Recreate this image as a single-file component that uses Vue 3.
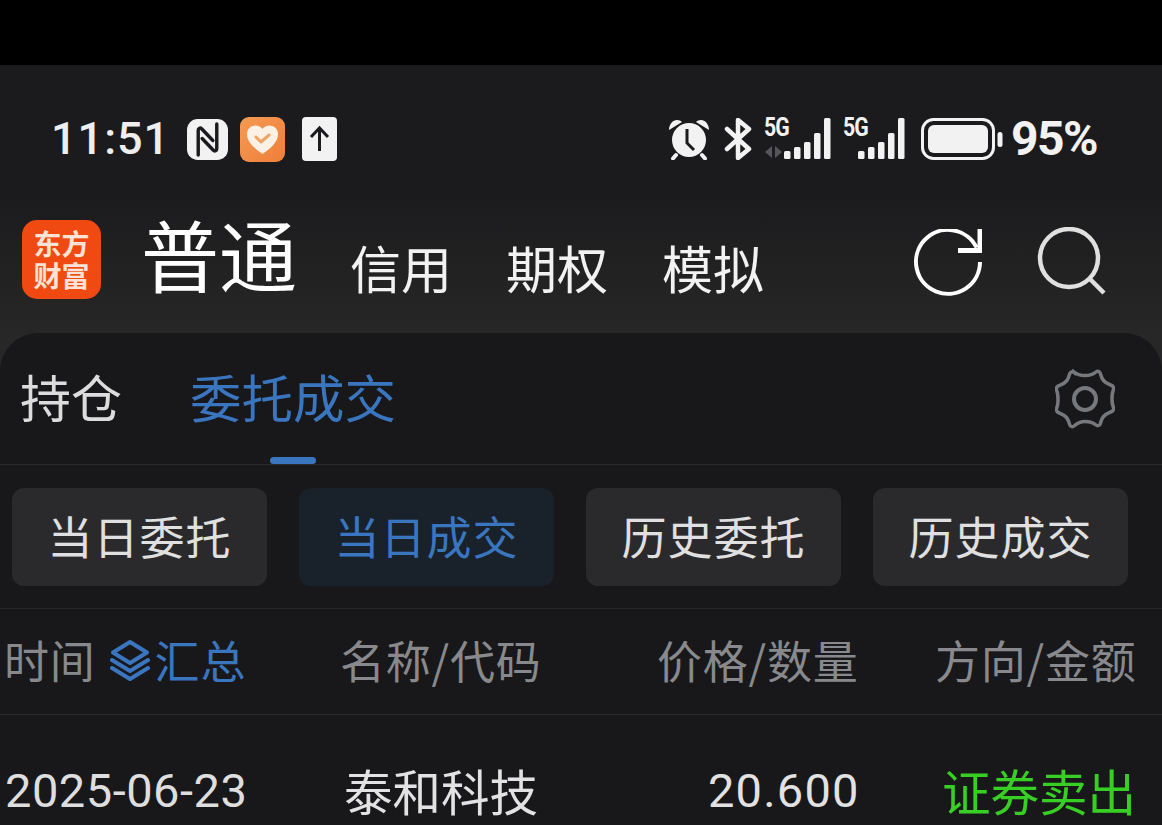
<script setup>
const filters = [
  { label: '当日委托' },
  { label: '当日成交', active: true },
  { label: '历史委托' },
  { label: '历史成交' }
]
const bars = [
  { x: 0, h: 8 },
  { x: 10, h: 12 },
  { x: 20, h: 17 },
  { x: 30, h: 26 },
  { x: 40, h: 41 }
]
</script>

<template>
  <div class="page">
    <div class="blackbar"></div>

    <div class="top">
      <div class="status">
        <div class="status-left">
          <span class="clock">11:51</span>
          <svg class="nfc" width="41" height="41" viewBox="0 0 42 42">
            <rect width="42" height="42" rx="11" fill="#f2f2f2" />
            <path d="M11.500 37V11.500a2 2 0 0 1 3.500-1.500l11.500 12" fill="none" stroke="#1b1b1d" stroke-width="3.500" stroke-linecap="round" />
            <path d="M30.500 5v25.500a2 2 0 0 1-3.500 1.500L15.500 20" fill="none" stroke="#1b1b1d" stroke-width="3.500" stroke-linecap="round" />
          </svg>
          <svg class="health" width="45" height="45" viewBox="0 0 45 45">
            <defs>
              <linearGradient id="healthBg" x1="0" y1="0" x2="1" y2="1">
                <stop offset="0" stop-color="#f59a52" />
                <stop offset="1" stop-color="#ee7f3a" />
              </linearGradient>
            </defs>
            <rect width="45" height="45" rx="9" fill="url(#healthBg)" />
            <path d="M22.500 37C14 31 7 25 7 17c0-5 4-8.500 8.500-8.500 3 0 5.500 1.200 7 3.500 1.500-2.300 4-3.500 7-3.500C34 8.500 38 12 38 17c0 8-7 14-15.500 20z" fill="#fdf1e6" />
            <path d="M16 20l5 5 8-7" fill="none" stroke="#f0a465" stroke-width="3" stroke-linecap="round" stroke-linejoin="round" />
          </svg>
          <svg class="upload" width="35" height="44" viewBox="0 0 35 44">
            <rect width="35" height="44" rx="4" fill="#f2f2f2" />
            <path d="M17.500 34V12M9 20l8.500-9 8.500 9" fill="none" stroke="#1b1b1d" stroke-width="3" />
          </svg>
        </div>

        <div class="status-right">
          <svg class="alarm" width="42" height="42" viewBox="0 0 42 42">
            <circle cx="21" cy="22" r="17" fill="#f2f2f2" />
            <path d="M1 12c0-6 4-10 8-10 2 0 4 .8 5 2zM41 12c0-6-4-10-8-10-2 0-4 .8-5 2z" fill="#f2f2f2" />
            <path d="M8 37l-3 3.500M34 37l3 3.500" stroke="#f2f2f2" stroke-width="4" stroke-linecap="round" />
            <path d="M19 11v14l7 7" fill="none" stroke="#1b1b1d" stroke-width="3" />
          </svg>
          <svg class="bt" width="28" height="42" viewBox="0 0 28 42">
            <path d="M3 11l22 20-11 9V2l11 9L3 31" fill="none" stroke="#f2f2f2" stroke-width="4.500" stroke-linejoin="round" stroke-linecap="round" />
          </svg>
          <div class="sim sim-first">
            <span class="five-g">5G</span>
            <svg class="arrows" width="18" height="12" viewBox="0 0 18 12">
              <path d="M7 0v12L0 6zM10 0v12l7-6z" fill="#55565a" />
            </svg>
            <svg class="bars" width="47" height="41" viewBox="0 0 47 41">
              <rect v-for="b in bars" :key="b.x" :x="b.x" :y="41 - b.h" width="6.500" :height="b.h" rx="1.500" fill="#f2f2f2" />
            </svg>
          </div>
          <div class="sim sim-second">
            <span class="five-g">5G</span>
            <svg class="bars" width="47" height="41" viewBox="0 0 47 41">
              <rect v-for="b in bars" :key="b.x" :x="b.x" :y="41 - b.h" width="6.500" :height="b.h" rx="1.500" fill="#f2f2f2" />
            </svg>
          </div>
          <svg class="battery" width="82" height="42" viewBox="0 0 82 42">
            <rect x="1.500" y="1.500" width="71" height="39" rx="11" fill="none" stroke="#f2f2f2" stroke-width="3" />
            <rect x="7" y="7" width="60" height="28" rx="6" fill="#f2f2f2" />
            <rect x="76.500" y="14" width="5" height="15" rx="2.500" fill="#f2f2f2" />
          </svg>
          <span class="percent">95%</span>
        </div>
      </div>

      <div class="header">
        <div class="logo">
          <span>东方</span>
          <span>财富</span>
        </div>
        <div class="title">普通</div>
        <div class="links">
          <span>信用</span>
          <span>期权</span>
          <span>模拟</span>
        </div>
        <div class="actions">
          <svg class="refresh" width="68" height="68" viewBox="0 0 68 68">
            <path d="M66 33A32 32 0 1 1 62.700 18.700" fill="none" stroke="#fff" stroke-width="4" />
            <path d="M66 0v21.500H44" fill="none" stroke="#fff" stroke-width="5" />
          </svg>
          <svg class="search" width="70" height="68" viewBox="0 0 70 68">
            <circle cx="32" cy="31" r="29" fill="none" stroke="#e0e0e0" stroke-width="4.500" />
            <path d="M53 52l14 14" stroke="#e0e0e0" stroke-width="4.500" />
          </svg>
        </div>
      </div>
    </div>

    <div class="card">
      <div class="tabs">
        <span class="tab">持仓</span>
        <span class="tab tab-active">委托成交</span>
        <svg class="gear" width="60" height="60" viewBox="0 0 60 60">
          <path d="M19 3c3.500 3 6.500 3.500 11 3.500S37.500 6 41 3c1-.8 2.500-.8 3.500 0 1.500 1.200 1 5 4 8.500s7 4 9 5.500c1 1 1.500 2.500 1 3.500-1.500 3-1.500 6-1.500 9s0 6 1.500 9c.5 1 0 2.500-1 3.500-2 1.500-6 2-9 5.500s-2.500 7.300-4 8.500c-1 .8-2.500.8-3.500 0-3.500-3-6.500-3.500-11-3.500S22.500 54 19 57c-1 .8-2.500.8-3.500 0-1.500-1.200-1-5-4-8.500s-7-4-9-5.500c-1-1-1.500-2.500-1-3.500C3 36.500 3 33 3 30s0-6-1.500-9c-.5-1 0-2.500 1-3.500 2-1.500 6-2 9-5.500s2.500-7.300 4-8.500c1-.8 2.500-.8 3.500 0z" fill="none" stroke="#77787b" stroke-width="3.500" />
          <circle cx="30" cy="30" r="11" fill="none" stroke="#77787b" stroke-width="4" />
        </svg>
        <div class="tab-mark"></div>
      </div>

      <div class="filters">
        <div v-for="f in filters" :key="f.label" class="filter" :class="{ on: f.active }">{{ f.label }}</div>
      </div>

      <div class="thead">
        <div class="col col-time">
          <span>时间</span>
          <svg class="layers" width="42" height="42" viewBox="0 0 42 42">
            <path d="M21 3L38 13.500 21 24 4 13.500z" fill="none" stroke="#3a76c0" stroke-width="4" stroke-linejoin="round" />
            <path d="M3 21l18 11 18-11M3 29l18 11 18-11" fill="none" stroke="#3a76c0" stroke-width="4" stroke-linecap="round" stroke-linejoin="round" />
          </svg>
          <span class="sum">汇总</span>
        </div>
        <div class="col col-name">名称/代码</div>
        <div class="col col-price">价格/数量</div>
        <div class="col col-side">方向/金额</div>
      </div>

      <div class="row">
        <div class="col-time date">2025-06-23</div>
        <div class="col-name stock">泰和科技</div>
        <div class="col-price price">20.600</div>
        <div class="col-side side">证券卖出</div>
      </div>
    </div>
  </div>
</template>

<style>
html, body {
  background: #000;
  overflow: hidden;
}
</style>

<style scoped>
.page {
  width: 1162px;
  height: 825px;
  overflow: hidden;
  display: flex;
  flex-direction: column;
  font-family: "Noto Sans", "Noto Sans CJK SC", sans-serif;
  color: #f2f2f2;
}

.blackbar {
  height: 65px;
  flex: none;
  background: #000;
}

.top {
  height: 308px;
  flex: none;
  background: linear-gradient(#1b1b1d 0%, #1b1b1d 40%, #272727 88%);
  display: flex;
  flex-direction: column;
}

.status {
  height: 44px;
  margin-top: 52px;
  padding: 0 65px 0 52px;
  display: flex;
  align-items: center;
  justify-content: space-between;
}

.status-left,
.status-right {
  display: flex;
  align-items: center;
}

.clock {
  font-family: Roboto, sans-serif;
  font-size: 45px;
  font-weight: 500;
  line-height: 44px;
  letter-spacing: 1px;
  color: #eeeeee;
  margin-left: -1px;
}

.nfc { margin-left: 17px; }
.health { margin-left: 12px; }
.upload { margin-left: 17px; }

.alarm { margin-right: 14px; }
.bt { margin-right: 12px; }

.sim {
  position: relative;
  width: 67px;
  height: 42px;
}

.sim-second { margin-left: 7px; }

.five-g {
  position: absolute;
  left: 0;
  top: -2px;
  font-family: "Roboto", sans-serif;
  font-weight: 700;
  font-size: 25px;
  line-height: 24px;
  letter-spacing: -1px;
  transform: scaleX(.85);
  transform-origin: left;
}

.sim-second .five-g { left: 5px; }

.arrows {
  position: absolute;
  left: 1px;
  top: 28px;
}

.bars {
  position: absolute;
  right: 0;
  top: 0;
}

.battery { margin-left: 16px; }

.percent {
  margin-left: 8px;
  font-family: Roboto, sans-serif;
  font-size: 48px;
  font-weight: 700;
  line-height: 44px;
  letter-spacing: -1.500px;
}

.header {
  display: flex;
  align-items: center;
  position: relative;
  height: 100px;
  margin-top: 48px;
  padding-left: 22px;
}

.logo {
  width: 79px;
  height: 79px;
  border-radius: 15px;
  background: #f04a12;
  display: flex;
  flex-direction: column;
  align-items: center;
  justify-content: center;
  font-family: "Noto Sans CJK SC", sans-serif;
  font-size: 28px;
  line-height: 32px;
  font-weight: 700;
  color: #fde3d3;
}

.title {
  margin-left: 40px;
  margin-top: -12px;
  font-family: "Noto Sans CJK SC", sans-serif;
  font-size: 78px;
  line-height: 80px;
  font-weight: 400;
  color: #fff;
}

.links {
  display: flex;
  gap: 54px;
  margin-left: 53px;
  margin-top: 16px;
  font-family: "Noto Sans CJK SC", sans-serif;
  font-size: 51px;
  line-height: 60px;
  color: #f2f2f2;
}

.actions {
  margin-left: auto;
  margin-right: 55px;
  margin-top: 5px;
  display: flex;
  align-items: flex-start;
  gap: 55px;
}

.refresh { margin-top: 2px; }

.card {
  flex: 1;
  background: #18181a;
  border-radius: 38px 38px 0 0;
  margin-top: -40px;
  position: relative;
}

.tabs {
  position: relative;
  height: 132px;
  border-bottom: 1px solid #2a2a2c;
  box-sizing: border-box;
  display: flex;
  align-items: center;
  padding: 0 0 6px 20px;
  font-family: "Noto Sans CJK SC", sans-serif;
  font-size: 51px;
}

.tab {
  color: #dcdcdc;
  line-height: 60px;
}

.tab-active {
  color: #3a76c0;
  font-size: 51.500px;
  margin-left: 68px;
}

.gear {
  margin-left: auto;
  margin-right: 47px;
  margin-top: 6px;
}

.tab-mark {
  position: absolute;
  left: 270px;
  bottom: 0;
  width: 46px;
  height: 7px;
  border-radius: 4px;
  background: #3a76c0;
}

.filters {
  height: 144px;
  box-sizing: border-box;
  padding: 23px 34px 22px 12px;
  display: flex;
  justify-content: space-between;
  border-bottom: 1px solid #252527;
  font-family: "Noto Sans CJK SC", sans-serif;
}

.filter {
  width: 255px;
  height: 98px;
  box-sizing: border-box;
  padding-bottom: 4px;
  border-radius: 12px;
  background: #2a2a2c;
  display: flex;
  align-items: center;
  justify-content: center;
  font-size: 45px;
  letter-spacing: 1px;
  color: #e0e0e0;
}

.filter.on {
  background: #19222a;
  color: #3a76c0;
}

.thead {
  height: 106px;
  box-sizing: border-box;
  padding-bottom: 4px;
  border-bottom: 1px solid #2a2a2c;
  display: grid;
  grid-template-columns: 340px 317px 278px 1fr;
  align-items: center;
  font-family: "Noto Sans CJK SC", sans-serif;
  font-size: 45px;
  letter-spacing: .8px;
  color: #88898c;
}

.col-time {
  padding-left: 4px;
  display: flex;
  align-items: center;
}

.layers { margin: 0 4px 0 13px; }
.sum { color: #3a76c0; }

.row {
  display: grid;
  grid-template-columns: 340px 317px 278px 1fr;
  align-items: center;
  padding-top: 25px;
  height: 100px;
  font-family: "Noto Sans CJK SC", sans-serif;
}

.date {
  padding-left: 5px;
  font-family: Roboto, sans-serif;
  font-size: 47px;
  letter-spacing: .5px;
  color: #dedede;
}

.stock {
  padding-left: 4px;
  font-size: 48.500px;
  color: #e2e2e2;
}

.price {
  font-family: Roboto, sans-serif;
  font-size: 47px;
  letter-spacing: 1.200px;
  padding-left: 51px;
  color: #e2e2e2;
}

.side {
  padding-left: 7px;
  font-size: 48.500px;
  color: #38cf24;
}

.thead .col-price,
.thead .col-side,
.thead .col-name { white-space: nowrap; }
</style>
